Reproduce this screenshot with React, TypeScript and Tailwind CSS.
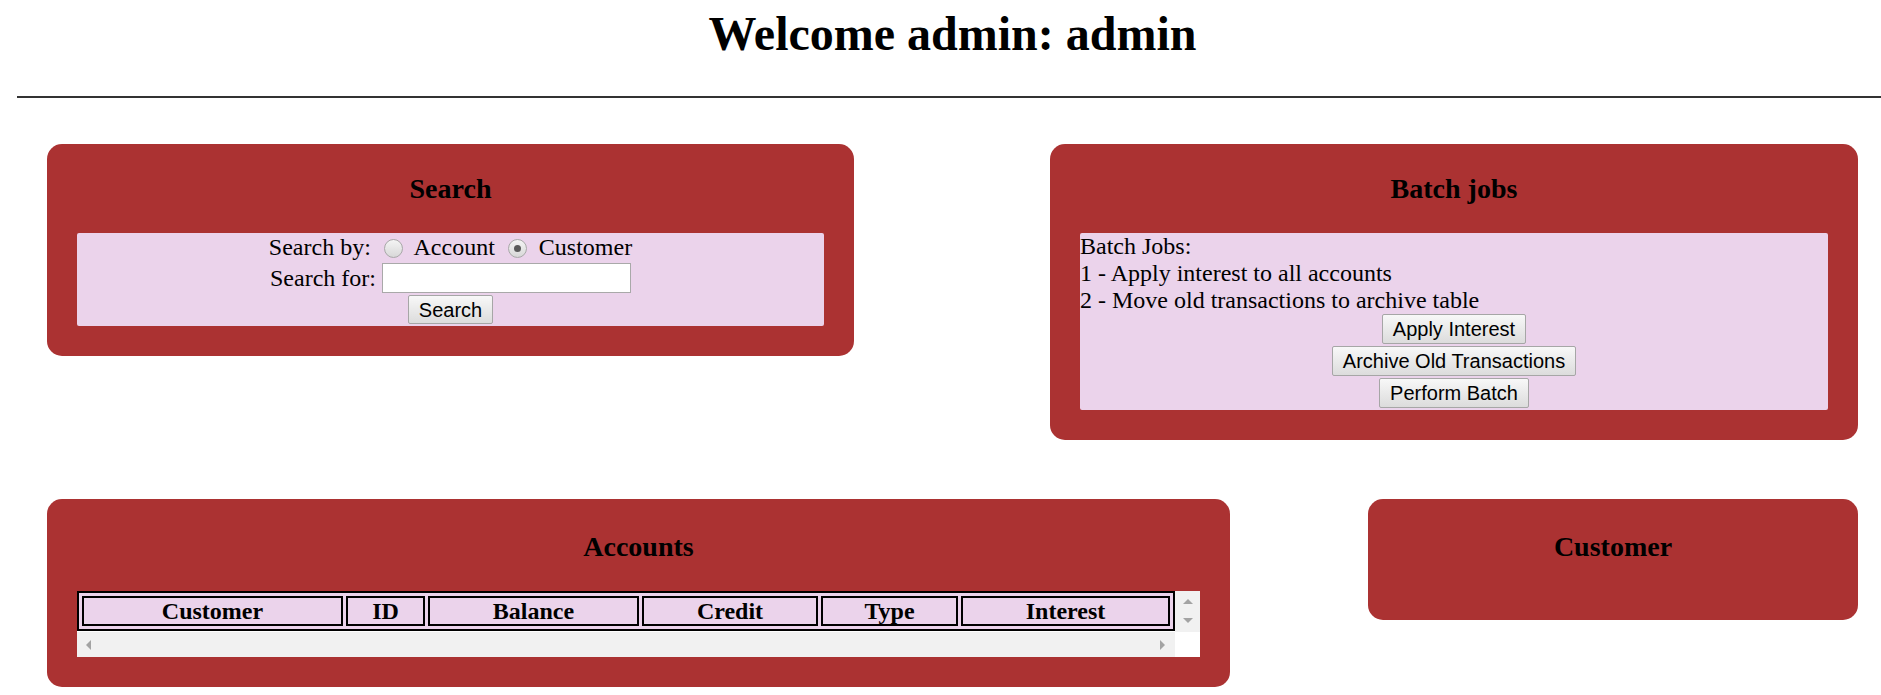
const panel = "bg-[#ab3232] rounded-[15px] px-[30px] pb-[30px]";
const heading = "text-center text-[28px] leading-[32px] font-bold mb-[28px]";
const lilac = "bg-[#ebd3eb] rounded-[2px]";

function Radio({ checked }: { checked?: boolean }) {
  return (
    <span className="relative inline-block align-[-3px] w-[19px] h-[19px] ml-[7px] mr-[6px] rounded-full border border-[#a8a8a8] bg-linear-to-b from-[#f4f4f4] to-[#d8d8d8]">
      {checked && (
        <span className="absolute left-[5px] top-[5px] w-[7px] h-[7px] rounded-full bg-[#5a5a5a]" />
      )}
    </span>
  );
}

function Btn({ children, className = "" }: { children: React.ReactNode; className?: string }) {
  return (
    <button
      className={`px-[10px] border border-[#a6a6a6] rounded-[2px] bg-linear-to-b from-[#f8f8f8] to-[#dcdcdc] font-['Liberation_Sans',Arial,sans-serif] text-[20px] leading-[22px] text-black ${className}`}
    >
      {children}
    </button>
  );
}

const columns = [
  { name: "Customer", w: "w-[261px]" },
  { name: "ID", w: "w-[79px]" },
  { name: "Balance", w: "w-[211px]" },
  { name: "Credit", w: "w-[176px]" },
  { name: "Type", w: "w-[137px]" },
  { name: "Interest", w: "w-[209px]" },
];

export default function App() {
  return (
    <div className="min-h-screen bg-white text-black font-['Liberation_Serif','Times_New_Roman',serif] text-[24px]">
      <h1 className="pl-[24px] pt-[6px] text-center text-[48px] leading-[55px] font-bold">
        Welcome admin: admin
      </h1>
      <hr className="ml-[17px] mt-[35px] h-[2px] border-0 bg-[#333]" />

      <div className="flex justify-between items-start pl-[47px] pr-[23px] mt-[46px]">
        <section className={`w-[807px] ${panel}`}>
          <h3 className={`${heading} mt-[29px]`}>Search</h3>
          <div className={`${lilac} flex flex-col items-center pb-[2px]`}>
            <div className="h-[28px] leading-[28px]">
              Search by:{" "}
              <Radio /> Account <Radio checked /> Customer
            </div>
            <div className="h-[33px] flex items-center">
              <span>Search for:&nbsp;</span>
              <input className="w-[249px] h-[30px] border border-[#a9a9a9] bg-white px-1" />
            </div>
            <Btn className="h-[29px] mt-[1px]">Search</Btn>
          </div>
        </section>

        <section className={`w-[808px] ${panel}`}>
          <h3 className={`${heading} mt-[29px]`}>Batch jobs</h3>
          <div className={`${lilac} pb-[2px]`}>
            <div className="leading-[27px]">
              <div>Batch Jobs:</div>
              <div>1 - Apply interest to all accounts</div>
              <div>2 - Move old transactions to archive table</div>
            </div>
            <div className="flex flex-col items-center gap-[2px]">
              <Btn className="h-[30px]">Apply Interest</Btn>
              <Btn className="h-[30px]">Archive Old Transactions</Btn>
              <Btn className="h-[30px]">Perform Batch</Btn>
            </div>
          </div>
        </section>
      </div>

      <div className="flex justify-between items-start pl-[47px] pr-[23px] mt-[59px]">
        <section className={`w-[1183px] ${panel}`}>
          <h3 className={`${heading} mt-[32px]`}>Accounts</h3>
          <div className="grid grid-cols-[1fr_25px] grid-rows-[41px_25px]">
            <div className="bg-white">
              <table className="table-fixed w-[1098px] border-2 border-black border-separate border-spacing-[3px] bg-[#ebd3eb]">
                <thead>
                  <tr>
                    {columns.map((c) => (
                      <th
                        key={c.name}
                        className={`${c.w} h-[30px] border-2 border-black p-0 leading-[26px] font-bold text-center`}
                      >
                        {c.name}
                      </th>
                    ))}
                  </tr>
                </thead>
              </table>
            </div>
            <div className="bg-[#f1f1f1] flex flex-col items-center justify-between pt-[8px] pb-[9px]">
              <span className="w-0 h-0 border-x-[5px] border-x-transparent border-b-[5px] border-b-[#a3a3a3]" />
              <span className="w-0 h-0 border-x-[5px] border-x-transparent border-t-[5px] border-t-[#a3a3a3]" />
            </div>
            <div className="bg-[#f1f1f1] flex items-center justify-between pl-[9px] pr-[10px]">
              <span className="w-0 h-0 border-y-[5px] border-y-transparent border-r-[5px] border-r-[#a3a3a3]" />
              <span className="w-0 h-0 border-y-[5px] border-y-transparent border-l-[5px] border-l-[#a3a3a3]" />
            </div>
            <div className="bg-white" />
          </div>
        </section>

        <section className={`w-[490px] h-[121px] ${panel}`}>
          <h3 className={`${heading} mt-[32px]`}>Customer</h3>
        </section>
      </div>
    </div>
  );
}
